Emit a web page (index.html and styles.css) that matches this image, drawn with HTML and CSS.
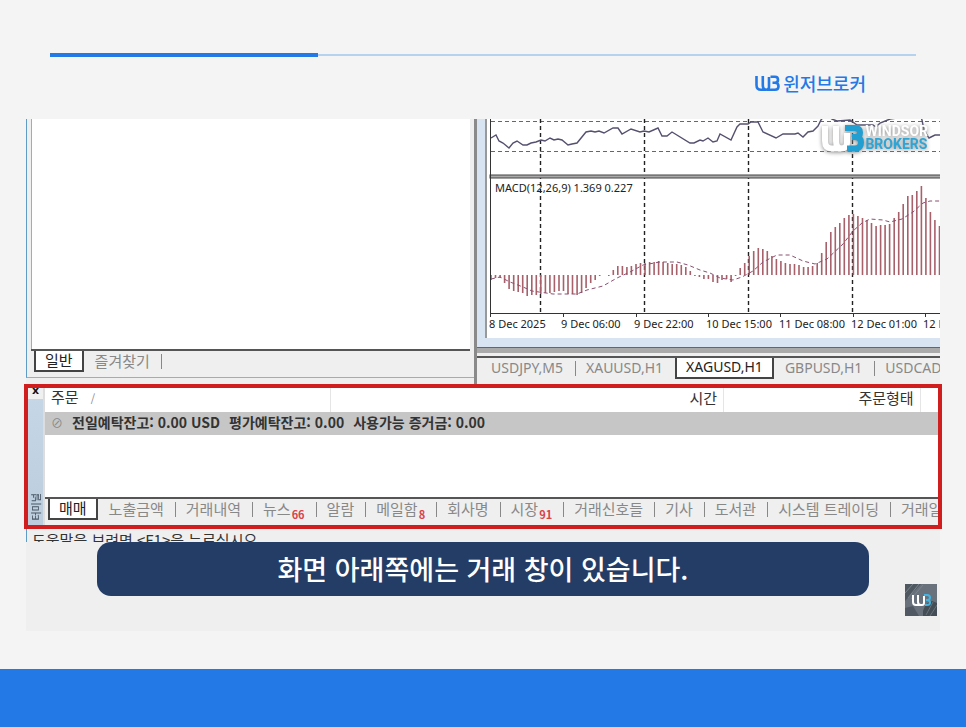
FILE: index.html
```html
<!DOCTYPE html>
<html lang="ko">
<head>
    <meta charset="UTF-8">
    <meta name="viewport" content="width=device-width, initial-scale=1.0">
    <title>윈저브로커</title>
    <link rel="stylesheet" href="styles.css">
</head>

<body>
    <header class="top">
        <div class="progress"><div class="progress-done"></div></div>
        <div class="brand">
            <svg class="brand-mark" viewBox="0 0 25 18" aria-hidden="true">
                <path class="mark-w" d="M1.500 2V11Q1.500 15.800 6 15.800H11Q14 15.800 14 13V3M7.800 2V11Q7.800 15.800 11.500 15.800" />
                <path class="mark-3" d="M15.500 2.700H20Q23 2.700 23 5.700Q23 8.800 20 8.800H17.500M20 8.800Q23.500 8.800 23.500 12.200Q23.500 15.800 20 15.800H12" />
            </svg>
            <span>윈저브로커</span>
        </div>
    </header>

    <main class="screen">
        <div class="workspace">
            <section class="navigator">
                <div class="navigator-list"></div>
                <nav class="tabs">
                    <button class="tab active">일반</button>
                    <button class="tab">즐겨찾기</button>
                    <span class="tab-end"></span>
                </nav>
            </section>

            <section class="charts">
                <div class="chart-window">
                    <svg class="chart" role="img" aria-label="XAGUSD,H1 MACD">
                        <path class="level" d="M4 2.500H2000M4 32.500H2000" />
                        <path class="period" d="M53.500 0V194M157.500 0V194M261.500 0V194M365.500 0V194" />
                        <polyline class="price" points="4,19 9,16 12,22 16,24 22,29 26,24 30,22 36,26 40,26 44,24 49,23 54,21 58,22 63,19 67,21 71,20 75,21 81,26 85,25 90,24 99,13 104,12 108,13 112,12 117,14 126,9 131,9 135,15 144,10 153,13 157,12 162,13 171,9 175,17 180,17 185,13 203,24 207,24 213,21 216,22 221,19 226,23 230,22 233,15 244,21 250,8 253,5 261,5 264,3 271,3 276,13 289,19 296,15 308,15 311,14 316,18 321,13 326,12 331,7 334,1 338,-4 345,0 350,2 363,1 370,6 386,6 389,8 393,4 403,0 433,-4 435,1 437,11 442,19 448,16 453,16" />
                        <rect class="splitter" x="3" y="56" width="2000" height="3" />
                        <path class="bars" id="bars" />
                        <polyline class="signal" points="4,160 13,158 23,163 36,168 45,172 66,175 90,175 100,171 116,167 130,159 143,153 156,146 173,143 190,143 201,146 213,151 223,154 233,159 246,161 255,158 266,152 276,143 290,136 303,136 316,142 328,145 340,140 356,125 366,112 375,104 383,100 396,101 403,103 415,100 426,93 436,84 443,82 453,82" />
                        <path class="axis" d="M3.500 0V194.500H2000M76.500 194V198M149.500 194V198M221.500 194V198M293.500 194V198M366.500 194V198M438.500 194V198M3.500 194V198" />
                        <text x="8" y="73">MACD(12,26,9) 1.369 0.227</text>
                        <text x="2" y="209">8 Dec 2025</text>
                        <text x="74" y="209">9 Dec 06:00</text>
                        <text x="147" y="209">9 Dec 22:00</text>
                        <text x="219" y="209">10 Dec 15:00</text>
                        <text x="292" y="209">11 Dec 08:00</text>
                        <text x="364" y="209">12 Dec 01:00</text>
                        <text x="436" y="209">12 Dec 17:00</text>
                    </svg>
                </div>
                <nav class="tabs chart-tabs">
                    <button class="tab">USDJPY,M5</button>
                    <button class="tab">XAUUSD,H1</button>
                    <button class="tab active">XAGUSD,H1</button>
                    <button class="tab">GBPUSD,H1</button>
                    <button class="tab">USDCAD,H1</button>
                </nav>
            </section>

            <div class="watermark">
                <svg class="watermark-mark" viewBox="0 0 44 30" aria-hidden="true">
                    <path class="mark-w" d="M4 3V18Q4 25.500 11 25.500H20Q26 25.500 26 20V10M15 3V18Q15 25.500 21 25.500" />
                    <path class="mark-3" d="M24 5H34Q39 5 39 9.500Q39 14 34 14H31M34 14Q40 14 40 19.500Q40 25.500 34 25.500H26" />
                </svg>
                <div class="watermark-name">
                    <span>WINDSOR</span>
                    <span class="blue">BROKERS</span>
                </div>
            </div>
        </div>

        <section class="terminal">
            <aside class="terminal-side">
                <button class="close" aria-label="닫기">x</button>
                <span class="terminal-title">터미널</span>
            </aside>
            <div class="terminal-body">
                <table class="orders">
                    <thead>
                        <tr>
                            <th class="col-order">주문 <span class="sort">/</span></th>
                            <th class="col-time">시간</th>
                            <th class="col-type">주문형태</th>
                            <th></th>
                        </tr>
                    </thead>
                    <tbody>
                        <tr>
                            <td colspan="4"><div class="balance"><span class="dot">⊘</span><span>전일예탁잔고: 0.00 USD</span><span>평가예탁잔고: 0.00</span><span>사용가능 증거금: 0.00</span></div></td>
                        </tr>
                    </tbody>
                </table>
                <nav class="tabs">
                    <button class="tab active">매매</button>
                    <button class="tab">노출금액</button>
                    <button class="tab">거래내역</button>
                    <button class="tab">뉴스<span class="count">66</span></button>
                    <button class="tab">알람</button>
                    <button class="tab">메일함<span class="count">8</span></button>
                    <button class="tab">회사명</button>
                    <button class="tab">시장<span class="count">91</span></button>
                    <button class="tab">거래신호들</button>
                    <button class="tab">기사</button>
                    <button class="tab">도서관</button>
                    <button class="tab">시스템 트레이딩</button>
                    <button class="tab">거래일지</button>
                </nav>
            </div>
        </section>

        <div class="status">도움말을 보려면 &lt;F1&gt;을 누르십시오</div>
        <p class="caption">화면 아래쪽에는 거래 창이 있습니다.</p>

        <div class="badge">
            <svg viewBox="0 0 32 32" aria-hidden="true">
                <rect width="32" height="32" fill="#68717c" />
                <path d="M0 0H16L0 17Z" fill="#4f5861" />
                <path d="M3 14L14 0M0 9L8 0M6 15L18 1" stroke="#7b848d" fill="none" />
                <path d="M18 32Q17 20 27 17L32 19V32Z" fill="#444c55" />
                <path d="M21 31L28 18M25 32L32 21" stroke="#69727b" fill="none" />
                <path d="M0 24L8 22L14 32H0Z" fill="#505963" />
                <path d="M8 11V18Q8 21 11 21H17Q19 21 19 19V12M13 11V18Q13 21 16 21" stroke="#fff" stroke-width="2" fill="none" />
                <path d="M19 11H22Q25 11 25 13.500Q25 16 22 16H21M22 16Q25 16 25 18.500Q25 21 22 21H20" stroke="#45b4e0" stroke-width="2" fill="none" />
            </svg>
        </div>
    </main>

    <footer class="bottom"></footer>
    <script src="chart.js"></script>
</body>

</html>
```
FILE: styles.css
```css
* {
    margin: 0;
    padding: 0;
    box-sizing: border-box;
}

body {
    display: flex;
    flex-direction: column;
    min-height: 100vh;
    background-color: #f4f4f4;
    color: #333;
    font-family: 'Noto Sans CJK KR', 'Noto Sans', sans-serif;
    font-size: 15px;
    overflow-x: hidden;
}

button {
    border: 0;
    background: none;
    color: inherit;
    font: inherit;
    white-space: nowrap;
    cursor: pointer;
}

/* Header */
.top {
    padding: 53px 50px 0;
    height: 119px;
}

.progress {
    display: flex;
    align-items: center;
    height: 4px;
    background: linear-gradient(#b5d2ee, #b5d2ee) center / 100% 2px no-repeat;
}

.progress-done {
    width: 31%;
    height: 4px;
    background-color: #2379e6;
}

.brand {
    display: flex;
    justify-content: flex-end;
    align-items: center;
    gap: 3px;
    margin-top: 13px;
    padding-right: 50px;
    color: #2379e6;
    font-size: 18px;
    font-weight: 500;
    line-height: 26px;
}

.brand-mark {
    width: 25px;
    height: 18px;
    fill: none;
    stroke: #2379e6;
    stroke-width: 2.6;
}

/* Screen */
.screen {
    position: relative;
    margin: 0 26px 38px;
    padding-bottom: 35px;
    background-color: #efefef;
}

.workspace {
    position: relative;
    display: flex;
    height: 265px;
    overflow: hidden;
}

.navigator {
    flex: 0 0 448px;
    display: flex;
    flex-direction: column;
    padding-left: 4px;
    height: 259px;
    border-left: 1px solid #5f9cc5;
    border-bottom: 1px solid #aaa;
}

.navigator-list {
    flex: 1;
    margin-right: 4px;
    background-color: #fff;
    border-left: 1px solid #aaa;
}

.navigator .tabs {
    margin-right: 4px;
}

/* Tabs */
.tabs {
    display: flex;
    height: 28px;
    padding-left: 3px;
    border-top: 2px solid #555;
    overflow: hidden;
}

.tab {
    position: relative;
    flex: none;
    height: 20px;
    padding: 0 11px;
    color: #888;
    line-height: 14px;
}

.tab.active {
    height: 23px;
    margin-top: -2px;
    padding: 0 9px;
    background-color: #fff;
    border: 2px solid #444;
    border-top: 0;
    color: #222;
    line-height: 18px;
}

.tab:not(.active) + .tab:not(.active)::before,
.tab-end {
    content: "";
    position: absolute;
    left: 0;
    top: 3px;
    width: 1px;
    height: 15px;
    background-color: #888;
}

.tab-end {
    position: static;
    margin-top: 3px;
}

.count {
    position: relative;
    top: 4px;
    margin-left: 1px;
    color: #d9434a;
    font-size: 11px;
    font-weight: 700;
}

/* Charts */
.charts {
    flex: 1;
    min-width: 0;
    border-left: 3px solid #8a8a8a;
}

.chart-window {
    padding: 0 0 9px 8px;
    background-color: #d8e4f1;
    border-bottom: 1px solid #666;
    box-shadow: 0 5px 0 #aaa;
}

.chart {
    display: block;
    width: 100%;
    height: 219px;
    background-color: #fff;
    border-left: 2px solid #999;
    font-family: 'Noto Sans', sans-serif;
    font-size: 11px;
    fill: #222;
}

.chart path,
.chart polyline {
    fill: none;
}

.chart .level {
    stroke: #2f8f2f;
    stroke-dasharray: 4 3;
}

.chart .period {
    stroke: #222;
    stroke-width: 1.4;
    stroke-dasharray: 4 3;
}

.chart .price {
    stroke: #55506f;
    stroke-width: 1.4;
}

.chart .splitter {
    fill: #aaa;
    stroke: #444;
}

.chart .bars {
    stroke: #a8606a;
    stroke-width: 1.6;
}

.chart .signal {
    stroke: #8a5070;
    stroke-dasharray: 4 3;
}

.chart .axis {
    stroke: #333;
}

.chart-tabs {
    margin-top: 8px;
    font-family: 'Noto Sans', sans-serif;
    font-size: 14px;
}

.chart-tabs .tab {
    padding: 0 12px 0 11px;
}

.chart-tabs .tab.active {
    padding: 0 9px;
}

/* Watermark */
.watermark {
    position: absolute;
    top: 4px;
    right: 12px;
    display: flex;
    align-items: center;
    filter: drop-shadow(0 1px 2px #888);
}

.watermark-mark {
    width: 44px;
    height: 30px;
    fill: none;
    stroke-width: 6;
}

.watermark .mark-w {
    stroke: #fff;
}

.watermark .mark-3 {
    stroke: #229fd0;
}

.watermark-name {
    display: flex;
    flex-direction: column;
    color: #fff;
    font-family: Roboto, sans-serif;
    font-size: 14px;
    font-weight: 700;
    line-height: 13px;
}

.watermark-name .blue {
    color: #2fa5d5;
}

/* Terminal */
.terminal {
    display: flex;
    height: 145px;
    margin: 0 -2px;
    border: 4px solid #d01e1e;
}

.terminal-side {
    flex: none;
    display: flex;
    flex-direction: column;
    justify-content: space-between;
    align-items: center;
    width: 17px;
    padding-bottom: 4px;
    background: linear-gradient(#f0f0f0 11px, #c5d7e7 11px, #bccddd);
    border-right: 2px solid #ddd;
}

.close {
    color: #111;
    font-family: 'DejaVu Sans', sans-serif;
    font-size: 11px;
    font-weight: 700;
    line-height: 6px;
}

.terminal-title {
    writing-mode: vertical-rl;
    text-orientation: sideways;
    transform: rotate(180deg);
    color: #4a5866;
    font-size: 10px;
    font-weight: 500;
    line-height: 12px;
}

.terminal-body {
    flex: 1;
    display: flex;
    flex-direction: column;
    justify-content: space-between;
    min-width: 0;
    background-color: #fff;
}

.orders {
    width: 100%;
    table-layout: fixed;
    border-collapse: collapse;
}

.orders th {
    height: 22px;
    padding: 0 6px 5px;
    border-right: 1px solid #e5e5e5;
    font-weight: 400;
    line-height: 17px;
    text-align: right;
}

.orders th:last-child {
    border: 0;
}

.orders .col-order {
    width: 32%;
    text-align: left;
}

.orders .col-time {
    width: 44%;
}

.orders .col-type {
    width: 22%;
}

.sort {
    margin-left: 8px;
    color: #888;
    font-size: 11px;
}

.balance {
    display: flex;
    gap: 9px;
    height: 23px;
    padding-left: 6px;
    background-color: #c6c6c6;
    font-size: 14px;
    font-weight: 700;
    line-height: 21px;
    white-space: nowrap;
}

.dot {
    color: #888;
    font-size: 12px;
    font-weight: 400;
}

.terminal .tabs {
    flex: none;
    background-color: #efefef;
}

/* Caption */
.status {
    height: 13px;
    padding-left: 5px;
    border-left: 1px solid #5f9cc5;
    font-size: 15px;
    line-height: 22px;
    overflow: hidden;
}

.caption {
    margin: 0 71px;
    background-color: #243d66;
    border-radius: 14px;
    color: #fff;
    font-size: 27px;
    font-weight: 500;
    line-height: 54px;
    text-align: center;
}

.badge {
    position: absolute;
    right: 3px;
    bottom: 15px;
    width: 32px;
    height: 32px;
}

/* Footer */
.bottom {
    flex: 1;
    min-height: 58px;
    background-color: #2379e6;
}
```
FILE: chart.js
```js
// MACD histogram, one value per hour, in pixels from the zero line
const macd = [
    -5, -3, -3, -8, -14, -16, -17, -18, -21, -20, -20, -19, -18, -18, -17, -16, -16, -19, -19, -20,
    -18, -13, -8, -5, -1, 0, -1, 5, 9, 9, 8, 9, 11, 12, 12, 13, 13, 14, 13, 12,
    11, 11, 10, 8, 4, -1, -2, -4, -4, -7, -8, -5, -4, -7, -1, 7, 12, 19, 24, 27,
    26, 24, 19, 16, 14, 12, 11, 11, 10, 8, 8, 9, 12, 22, 33, 43, 48, 52, 57, 60,
    61, 59, 57, 55, 52, 49, 50, 50, 51, 57, 63, 71, 79, 80, 84, 89, 77, 63, 55, 49
];
const zero = 156;
const step = 4.53;

const d = macd.map((value, i) => `M${(4 + i * step).toFixed(1)} ${zero}v${-value}`).join('');
document.getElementById('bars').setAttribute('d', d);
```
